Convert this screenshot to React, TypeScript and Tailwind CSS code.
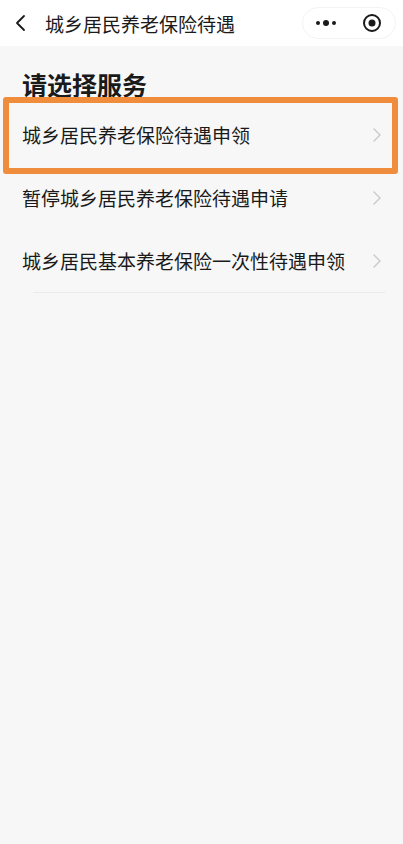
import React from 'react';

const items = [
  '城乡居民养老保险待遇申领',
  '暂停城乡居民养老保险待遇申请',
  '城乡居民基本养老保险一次性待遇申领',
];

const font = { fontFamily: '"Noto Sans CJK SC", "Noto Sans", sans-serif' };

const Chevron = () => (
  <svg width="10" height="16" viewBox="0 0 10 16" fill="none">
    <path d="M2 2l6 6-6 6" stroke="#c9c9c9" strokeWidth="1.4" strokeLinecap="round" strokeLinejoin="round" />
  </svg>
);

export default function App() {
  return (
    <div className="min-h-[844px] w-full bg-[#f7f7f7] text-[#1a1a1a]" style={font}>
      {/* nav bar */}
      <div className="flex h-[46px] items-center bg-white pl-[14px] pr-[7px]">
        <svg width="14" height="20" viewBox="0 0 14 20" fill="none">
          <path d="M10 3L3 10l7 7" stroke="#1a1a1a" strokeWidth="1.8" strokeLinecap="round" strokeLinejoin="round" />
        </svg>
        <div className="ml-[17px] flex-1 text-[19px] leading-none">城乡居民养老保险待遇</div>
        <div className="flex h-[32px] w-[94px] items-center rounded-full border border-[#f3f3f3]">
          <div className="flex flex-1 items-center justify-center gap-[3px]">
            <span className="h-[4px] w-[4px] rounded-full bg-[#1a1a1a]" />
            <span className="h-[6px] w-[6px] rounded-full bg-[#1a1a1a]" />
            <span className="h-[4px] w-[4px] rounded-full bg-[#1a1a1a]" />
          </div>
          <div className="flex flex-1 items-center justify-center">
            <svg width="20" height="20" viewBox="0 0 20 20" fill="none">
              <circle cx="10" cy="10" r="8" stroke="#1a1a1a" strokeWidth="2" />
              <circle cx="10" cy="10" r="3.5" fill="#1a1a1a" />
            </svg>
          </div>
        </div>
      </div>

      <div className="px-[22px] pt-[23px] text-[25px] font-bold leading-[30px]">请选择服务</div>

      <div className="mt-[4px]">
        {items.map((t, i) => (
          <div key={t} className="relative">
            <div className="mx-[22px] flex h-[63px] items-center justify-between">
              <span className="text-[19px] leading-none">{t}</span>
              <span className="mr-[-1px]">
                <Chevron />
              </span>
            </div>
            {i === 0 && (
              <div className="pointer-events-none absolute left-[3px] right-[5px] top-[-6px] bottom-[-8px] rounded-[3px] border-[6px] border-[#ef8d3d]" />
            )}
            {i === items.length - 1 && <div className="ml-[33px] mr-[18px] h-px bg-[#ebebeb]" />}
          </div>
        ))}
      </div>
    </div>
  );
}
